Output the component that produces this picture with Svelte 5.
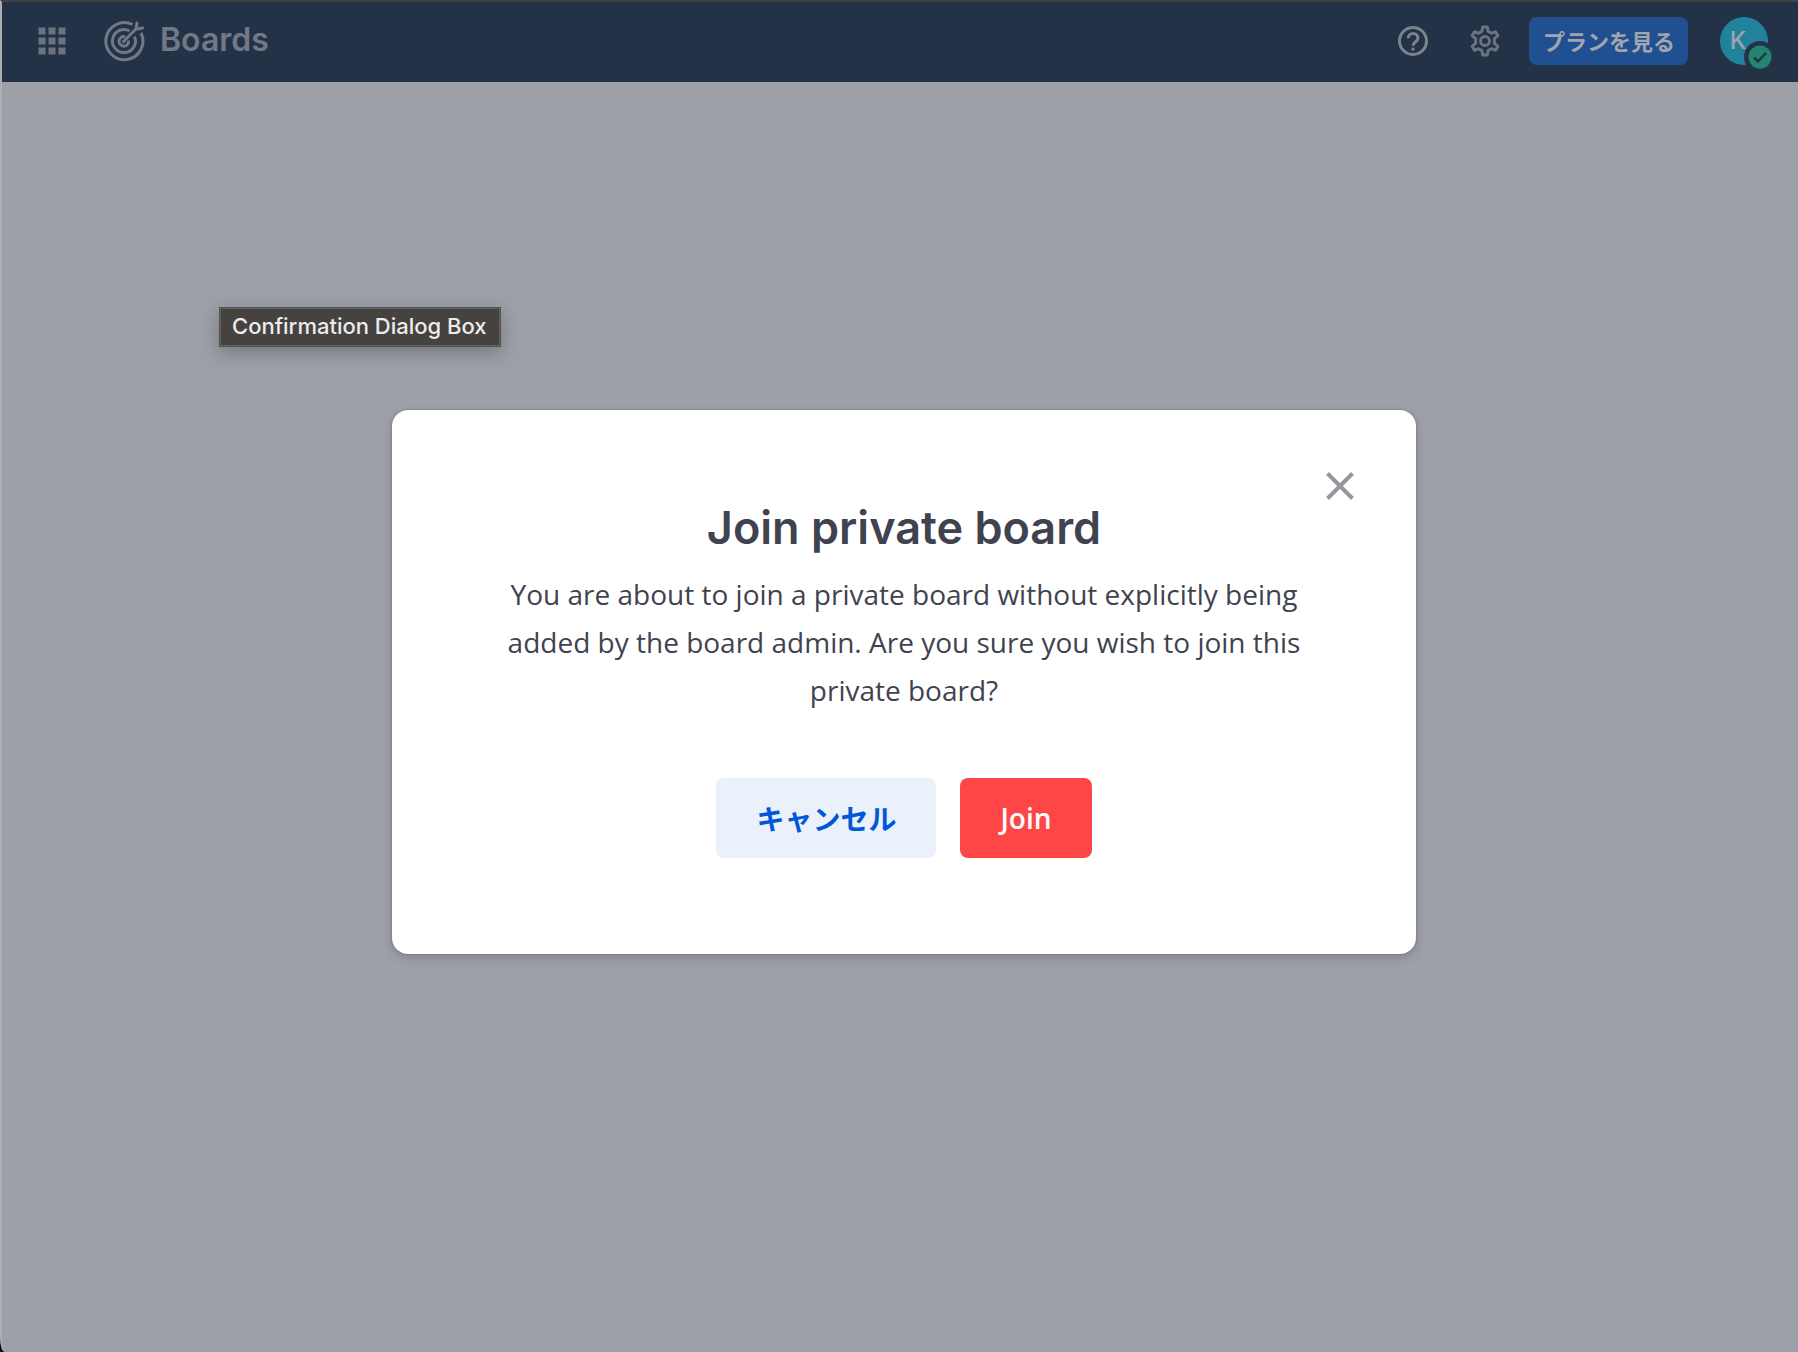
<script>
  let open = $state(true);
  const cells = [0, 10, 20];
</script>

<div class="window">
  <header class="bar">
    <button class="icon switcher" aria-label="Product menu">
      <svg width="28" height="28" viewBox="0 0 28 28" aria-hidden="true">
        {#each cells as y}
          {#each cells as x}
            <rect x={x + 0.5} y={y + 0.5} width="7" height="7" fill="currentColor" />
          {/each}
        {/each}
      </svg>
    </button>
    <a class="brand" href="/boards">
      <svg width="42" height="42" viewBox="0 0 42 42" fill="none" stroke="currentColor" stroke-width="3" stroke-linecap="butt" aria-hidden="true">
        <path d="M29.5 4.5A18.5 18.5 0 1 0 38 13" />
        <path d="M26.5 11A11.5 11.5 0 1 0 31.5 16.5" />
        <path d="M22 16.7A4.8 4.8 0 1 0 25.5 20.5" />
        <path d="M20.5 21.5L33 9M32.8 9.2L34 3M32.8 9.2L39.5 8" stroke-linecap="round" />
      </svg>
      <span>Boards</span>
    </a>
    <div class="actions">
      <button class="icon" aria-label="Help">
        <svg width="32" height="32" viewBox="0 0 32 32" fill="none" stroke="currentColor" stroke-width="3" aria-hidden="true">
          <circle cx="16" cy="16" r="13.5" />
          <path d="M11.3 13.2c0-6.4 9.6-6.4 9.6 0 0 3.6-4.8 3.6-4.8 7.6" />
          <rect x="14.5" y="22.6" width="3" height="3" fill="currentColor" stroke="none" />
        </svg>
      </button>
      <button class="icon dim" aria-label="Settings">
        <svg width="32" height="32" viewBox="0 0 32 32" fill="none" stroke="currentColor" stroke-width="3" stroke-linejoin="round" aria-hidden="true">
          <path d="M13.7 2h4.6l.8 4.4 3.3 1.9 4.1-1.6 2.4 4-3.5 2.9v4.8l3.5 2.9-2.4 4-4.1-1.6-3.3 1.9-.8 4.4h-4.6l-.8-4.4-3.3-1.9-4.1 1.6-2.4-4 3.5-2.9v-4.8l-3.5-2.9 2.4-4 4.1 1.6 3.3-1.9z" />
          <circle cx="16" cy="16" r="4.5" />
        </svg>
      </button>
      <button class="plans">プランを見る</button>
      <button class="avatar" aria-label="Account, online">
        <span class="initial">K</span>
        <svg class="status" width="32" height="32" viewBox="0 0 32 32" aria-hidden="true">
          <circle cx="16" cy="16" r="16" fill="#243247" />
          <circle cx="16" cy="16" r="11.5" fill="#238570" />
          <path d="M10 16.5l4 4 8-8.5" fill="none" stroke="#243247" stroke-width="2.5" />
        </svg>
      </button>
    </div>
  </header>

  <div class="tooltip" role="tooltip">Confirmation Dialog Box</div>

  <main class="stage">
    {#if open}
      <div class="dialog" role="dialog" aria-modal="true" aria-labelledby="title" aria-describedby="message">
        <button class="close" aria-label="Close" onclick={() => (open = false)}>
          <svg width="28" height="28" viewBox="0 0 28 28" fill="none" stroke="currentColor" stroke-width="4" aria-hidden="true">
            <path d="M1.5 1.5l25 25M26.5 1.5l-25 25" />
          </svg>
        </button>
        <h1 id="title">Join private board</h1>
        <p id="message">
          You are about to join a private board without explicitly being added by the board admin. Are you sure you wish to join this private board?
        </p>
        <div class="buttons">
          <button class="cancel" onclick={() => (open = false)}>キャンセル</button>
          <button class="join" onclick={() => (open = false)}>Join</button>
        </div>
      </div>
    {/if}
  </main>
</div>

<style>
  :global(body) {
    margin: 0;
    background: #060911;
  }
  .window {
    position: relative;
    box-sizing: border-box;
    min-height: 100vh;
    border-top: 2px solid #414145;
    border-left: 2px solid #adafb5;
    border-bottom-left-radius: 5px 14px;
    background: #9ea0a8;
    font-family: "Open Sans", "Noto Sans CJK JP", sans-serif;
    overflow: hidden;
  }
  button {
    border: 0;
    padding: 0;
    background: none;
    font-family: inherit;
    cursor: pointer;
  }
  svg {
    display: block;
  }
  .bar {
    display: flex;
    align-items: center;
    box-sizing: border-box;
    height: 80px;
    padding: 0 30px 2px 36px;
    background: #243247;
    color: #727986;
  }
  .icon {
    color: #7c838e;
  }
  .icon.switcher,
  .icon.dim {
    color: #6b7381;
  }
  .brand {
    display: flex;
    align-items: center;
    gap: 15px;
    margin-left: 37px;
    color: inherit;
    text-decoration: none;
    font: 600 32px/40px Inter, sans-serif;
  }
  .brand span {
    padding-bottom: 2px;
  }
  .actions {
    display: flex;
    align-items: center;
    margin-left: auto;
  }
  .actions .dim {
    margin: 0 28px 0 40px;
  }
  .plans {
    height: 48px;
    padding: 0 13px 0 14px;
    border-radius: 8px;
    background: #205092;
    color: #a1a5ad;
    font-size: 22px;
    font-weight: 600;
    line-height: 48px;
  }
  .avatar {
    position: relative;
    width: 48px;
    height: 48px;
    margin-left: 32px;
    border-radius: 50%;
    background: #22829b;
    color: #9ba4b0;
  }
  .initial {
    display: block;
    padding-right: 12px;
    font: 500 24px/46px Inter, sans-serif;
  }
  .status {
    position: absolute;
    left: 24px;
    top: 24px;
  }
  .tooltip {
    position: absolute;
    left: 217px;
    top: 305px;
    box-sizing: border-box;
    height: 40px;
    padding: 0 13px 0 12px;
    border: 1px solid #54535a;
    outline: 1px solid #63615f;
    outline-offset: -2px;
    background: #464240;
    box-shadow: 0 6px 18px rgba(40, 40, 50, 0.35);
    color: #ececec;
    font: 500 22px/37px Inter, sans-serif;
  }
  .stage {
    display: flex;
    justify-content: center;
    padding: 328px 0 40px 8px;
  }
  .dialog {
    position: relative;
    box-sizing: border-box;
    width: 100%;
    max-width: 1024px;
    padding: 90px 108px 96px;
    border-radius: 16px;
    background: #fff;
    box-shadow: 0 0 2px rgba(60, 64, 72, 0.6), 0 4px 10px rgba(60, 64, 72, 0.25);
    color: #3f4350;
    text-align: center;
  }
  .close {
    position: absolute;
    top: 62px;
    right: 62px;
    color: #94979e;
  }
  h1 {
    margin: 0;
    font: 600 45px/56px Inter, sans-serif;
  }
  p {
    margin: 14px 0 0;
    font-size: 28px;
    line-height: 48px;
  }
  .buttons {
    display: flex;
    justify-content: center;
    gap: 24px;
    margin-top: 64px;
  }
  .buttons button {
    height: 80px;
    padding: 0 40px;
    border-radius: 8px;
    font-size: 28px;
    font-weight: 600;
  }
  .buttons .cancel {
    background: #eaf1fb;
    color: #0058d9;
  }
  .buttons .join {
    background: #ff4646;
    color: #fff;
  }
</style>
